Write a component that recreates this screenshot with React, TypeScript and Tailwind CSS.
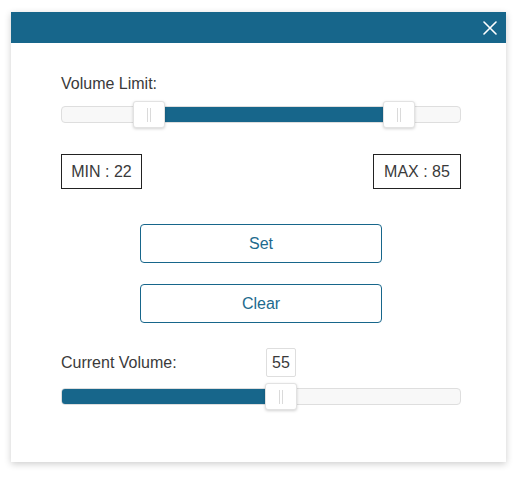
const ACCENT = 'bg-[#17668b]';

function Thumb({ left }: { left: number }) {
  return (
    <div
      className="absolute top-0 w-[32px] h-[27px] bg-white rounded-[3px] border border-[#e2e2e2] shadow-[0_1px_3px_rgba(0,0,0,0.18)] flex items-center justify-center"
      style={{ left }}
    >
      <div className="w-[4px] h-[14px] border-l border-r border-[#dadada]" />
    </div>
  );
}

function Track({ from, to }: { from: number; to: number }) {
  return (
    <div className="relative h-[27px]">
      <div className="absolute left-0 right-0 top-[5px] h-[17px] rounded-[4px] border border-[#dedede] bg-[#f8f8f8] overflow-hidden">
        <div className={`absolute top-0 bottom-0 ${ACCENT}`} style={{ left: from, width: to - from }} />
      </div>
    </div>
  );
}

export default function App() {
  return (
    <div className="w-[527px] h-[478px] bg-white pt-[12px] pl-[11px]" style={{ fontFamily: '"Liberation Sans", Arial, sans-serif' }}>
      <div className="w-[495px] h-[450px] bg-white shadow-[0_2px_7px_rgba(0,0,0,0.2)]">
        <div className={`h-[31px] ${ACCENT} flex items-center justify-end pr-[9px]`}>
          <svg width="14" height="14" viewBox="0 0 14 14" fill="none" stroke="white" strokeWidth="1.6" strokeLinecap="round">
            <path d="M1 1L13 13M13 1L1 13" />
          </svg>
        </div>

        <div className="pl-[50px] pr-[45px] pt-[32px] text-[#3a3a3a]">
          <div className="text-[16px] leading-[17px]">Volume Limit:</div>

          <div className="relative mt-[9px]">
            <Track from={88} to={323} />
            <Thumb left={72} />
            <Thumb left={322} />
          </div>

          <div className="flex justify-between mt-[26px]">
            <div className="h-[35px] w-[81px] border border-[#222] flex items-center justify-center text-[16px]">MIN : 22</div>
            <div className="h-[35px] w-[88px] border border-[#222] flex items-center justify-center text-[16px]">MAX : 85</div>
          </div>

          <button className="block mx-auto mt-[35px] w-[242px] h-[39px] border border-[#17668b] rounded-[4px] text-[#1d6a8e] text-[16px]">
            Set
          </button>
          <button className="block mx-auto mt-[21px] w-[242px] h-[39px] border border-[#17668b] rounded-[4px] text-[#1d6a8e] text-[16px]">
            Clear
          </button>

          <div className="relative mt-[25px] h-[29px] flex items-center">
            <span className="text-[16px] leading-[17px]">Current Volume:</span>
            <div className="absolute left-[205px] top-0 w-[30px] h-[29px] border border-[#dedede] rounded-[2px] bg-white flex items-center justify-center text-[16px]">
              55
            </div>
          </div>

          <div className="relative mt-[6px]">
            <Track from={0} to={210} />
            <Thumb left={204} />
          </div>
        </div>
      </div>
    </div>
  );
}
